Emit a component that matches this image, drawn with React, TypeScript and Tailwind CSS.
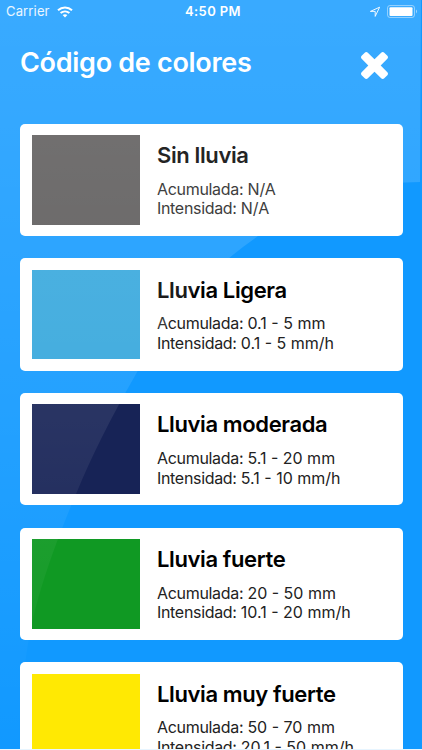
type Level = {
  name: string;
  accumulated: string;
  intensity: string;
  swatch: string;
};

const LEVELS: Level[] = [
  { name: 'Sin lluvia', accumulated: 'N/A', intensity: 'N/A', swatch: 'bg-[#595757]' },
  { name: 'Lluvia Ligera', accumulated: '0.1 - 5 mm', intensity: '0.1 - 5 mm/h', swatch: 'bg-[#33a6dc]' },
  { name: 'Lluvia moderada', accumulated: '5.1 - 20 mm', intensity: '5.1 - 10 mm/h', swatch: 'bg-[#172356]' },
  { name: 'Lluvia fuerte', accumulated: '20 - 50 mm', intensity: '10.1 - 20 mm/h', swatch: 'bg-[#109923]' },
  { name: 'Lluvia muy fuerte', accumulated: '50 - 70 mm', intensity: '20.1 - 50 mm/h', swatch: 'bg-[#ffe903]' },
];

function StatusBar() {
  return (
    <div className="grid h-[23px] shrink-0 grid-cols-3 items-center pl-[6px] pr-[4px] text-[13px] leading-none">
      <div className="flex items-center gap-[7px]">
        <span className="tracking-[0.15px] text-white/90">Carrier</span>
        <svg width="16" height="12" viewBox="0 0 16 12" fill="none" stroke="white" strokeWidth="2">
          <path d="M1 4.3C5 .6 11 .6 15 4.3" />
          <path d="M3.6 7.1C6.2 4.8 9.8 4.8 12.4 7.1" />
          <path d="M8 11.5 5.6 9.1C7 7.9 9 7.9 10.4 9.1Z" fill="white" stroke="none" />
        </svg>
      </div>
      <span className="pl-[2px] text-center font-semibold tracking-[0.4px]">4:50 PM</span>
      <div className="flex items-center justify-end gap-[6px]">
        <svg width="12" height="12" viewBox="0 0 12 12" fill="none" stroke="white" strokeOpacity="0.9">
          <path d="M10.6 1.2 1.4 5.4H6.2V10.4Z" />
        </svg>
        <svg width="31" height="13" viewBox="0 0 31 13">
          <rect x=".5" y=".5" width="27" height="12" rx="2.5" fill="none" stroke="white" strokeOpacity="0.45" />
          <rect x="2.5" y="2.2" width="23" height="8.8" rx="1" fill="white" />
          <path d="M29 4.6C30.4 5 30.4 8 29 8.4Z" fill="white" fillOpacity="0.5" />
        </svg>
      </div>
    </div>
  );
}

function Reading({ label, value }: { label: string; value: string }) {
  return (
    <p>
      <span className="tracking-[-0.32px]">{label}: </span>
      {value}
    </p>
  );
}

function LevelCard({ level }: { level: Level }) {
  return (
    <div className="flex h-[112.5px] shrink-0 items-center rounded-[5px] bg-white pl-[11.5px] text-black">
      <div className={`h-[89.5px] w-[108px] shrink-0 ${level.swatch}`} />
      <div className="ml-[17.5px] flex h-full flex-col pt-[17.4px]">
        <h2 className="text-[22px] font-semibold leading-[28px] tracking-[-0.38px]">{level.name}</h2>
        <div className="mt-[10.7px] text-[16px] leading-[19.6px] text-[#222]">
          <Reading label="Acumulada" value={level.accumulated} />
          <Reading label="Intensidad" value={level.intensity} />
        </div>
      </div>
    </div>
  );
}

// Translucent sheen lying over the whole screen
function Sheen() {
  return (
    <svg className="pointer-events-none absolute inset-0" width="422" height="750" viewBox="0 0 422 750">
      <defs>
        <linearGradient id="sheen" x1="0" y1="0" x2="0" y2="750" gradientUnits="userSpaceOnUse">
          <stop offset="0" stopColor="white" stopOpacity="0.17" />
          <stop offset="0.15" stopColor="white" stopOpacity="0.15" />
          <stop offset="0.6" stopColor="white" stopOpacity="0.07" />
          <stop offset="1" stopColor="white" stopOpacity="0" />
        </linearGradient>
      </defs>
      <path d="M0 0H421L420 182Q330 182 258 236Q180 290 136 374Q98 440 76 494Q48 560 35 610Q22 660 18 750H0Z" fill="url(#sheen)" />
    </svg>
  );
}

export default function App() {
  return (
    <div className="relative flex h-[750px] w-[422px] flex-col overflow-hidden border-b border-white/90 bg-[#1199ff] font-['Inter','Liberation_Sans',sans-serif] text-white">
      <StatusBar />
      <header className="flex h-[100.5px] shrink-0 items-start justify-between pl-[20px] pr-[34px] pt-[22px]">
        <h1 className="text-[27px] font-semibold leading-[35px] tracking-[-0.3px]">Código de colores</h1>
        <button type="button" aria-label="Cerrar" className="mt-[7px]">
          <svg width="27" height="27" viewBox="302 366 1188 1188" fill="white">
            <path d="M1490 1322q0 40-28 68l-136 136q-28 28-68 28t-68-28l-294-294-294 294q-28 28-68 28t-68-28l-136-136q-28-28-28-68t28-68l294-294-294-294q-28-28-28-68t28-68l136-136q28-28 68-28t68 28l294 294 294-294q28-28 68-28t68 28l136 136q28 28 28 68t-28 68l-294 294 294 294q28 28 28 68z" />
          </svg>
        </button>
      </header>
      <main className="flex flex-col gap-[22.2px] pl-[20px] pr-[19px]">
        {LEVELS.map((level) => (
          <LevelCard key={level.name} level={level} />
        ))}
      </main>
      <Sheen />
    </div>
  );
}
